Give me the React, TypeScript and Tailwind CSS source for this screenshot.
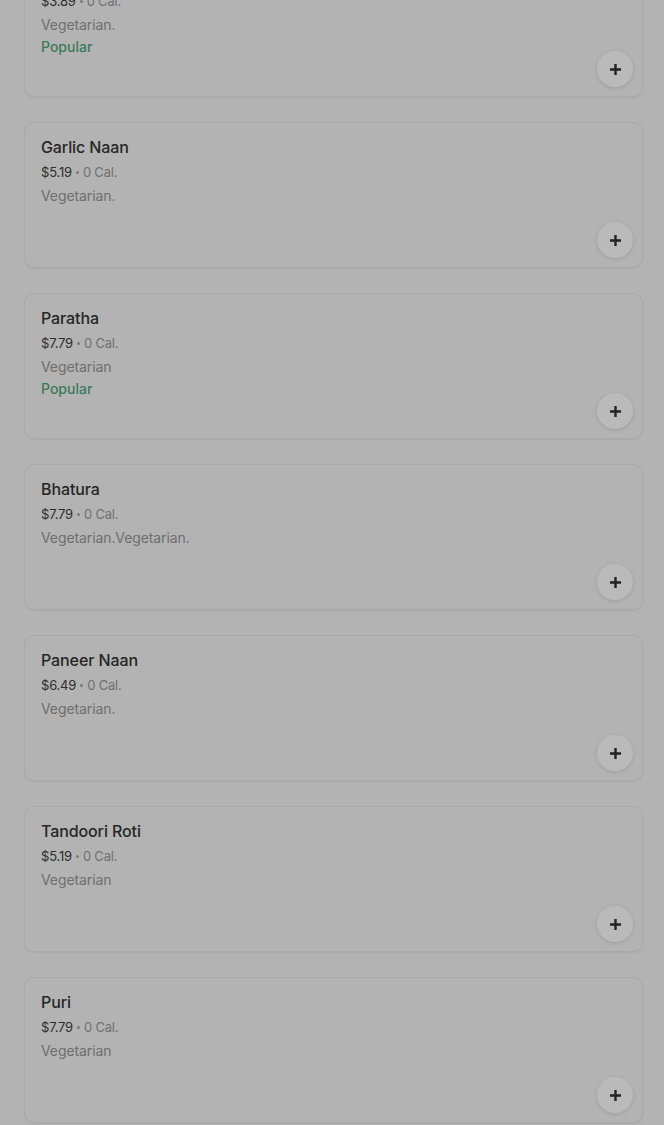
import React from "react";

type Item = { name: string; price: string; desc: string; popular?: boolean };

const items: Item[] = [
  { name: "Butter Naan", price: "$3.89", desc: "Vegetarian.", popular: true },
  { name: "Garlic Naan", price: "$5.19", desc: "Vegetarian." },
  { name: "Paratha", price: "$7.79", desc: "Vegetarian", popular: true },
  { name: "Bhatura", price: "$7.79", desc: "Vegetarian.Vegetarian." },
  { name: "Paneer Naan", price: "$6.49", desc: "Vegetarian." },
  { name: "Tandoori Roti", price: "$5.19", desc: "Vegetarian" },
  { name: "Puri", price: "$7.79", desc: "Vegetarian" },
];

function Plus() {
  return (
    <svg width="13" height="13" viewBox="0 0 13 13" fill="none">
      <path d="M6.5 1v11M1 6.5h11" stroke="#222" strokeWidth="2.4" />
    </svg>
  );
}

function Card({ item }: { item: Item }) {
  return (
    <div className="relative h-[146px] rounded-[10px] border border-[#a9a9a9] px-4 pt-[14px] shadow-[0_1px_2px_rgba(0,0,0,0.06)]">
      <div className="text-[16px] leading-5 font-medium tracking-[-0.1px] text-[#262626]">{item.name}</div>
      <div className="mt-[5px] flex items-center text-[13px] leading-5 tracking-[-0.2px] text-[#2e2e2e]">
        <span>{item.price}</span>
        <span className="mx-[4px] inline-block h-[3px] w-[3px] rounded-full bg-[#7a7a7a]" />
        <span className="text-[#707070]">0 Cal.</span>
      </div>
      <div className="mt-[4px] text-[14px] leading-5 tracking-[-0.1px] text-[#6e6e6e]">{item.desc}</div>
      {item.popular && (
        <div className="mt-[2px] text-[14px] leading-5 font-medium text-[#3b7a5a]">Popular</div>
      )}
      <button className="absolute right-[9px] bottom-[9px] flex h-9 w-9 items-center justify-center rounded-full bg-[#bababa] shadow-[0_1px_4px_rgba(0,0,0,0.12)]">
        <Plus />
      </button>
    </div>
  );
}

export default function App() {
  return (
    <div
      className="h-[1125px] overflow-hidden bg-[#b3b3b3]"
      style={{ fontFamily: "Inter, 'Noto Sans', sans-serif" }}
    >
      <div className="-mt-[49px] flex flex-col gap-[25px] pl-6 pr-[21px]">
        {items.map((it) => (
          <Card key={it.name} item={it} />
        ))}
      </div>
    </div>
  );
}
